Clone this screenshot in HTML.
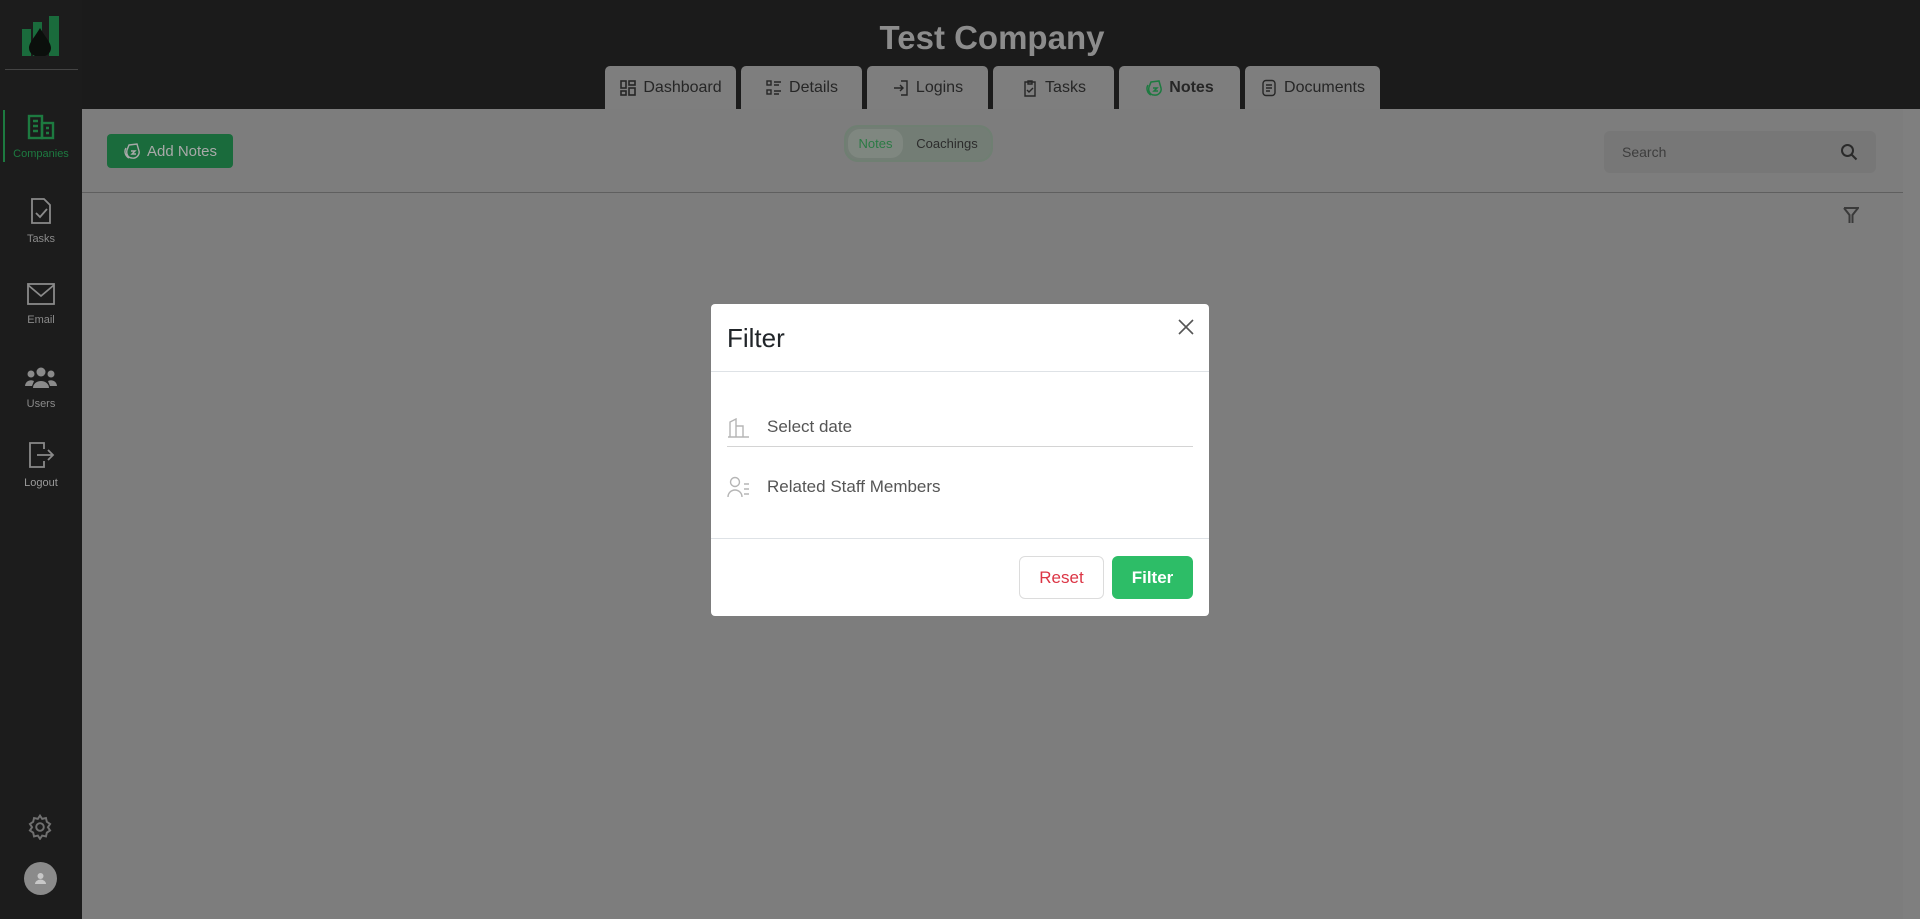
<!DOCTYPE html>
<html><head><meta charset="utf-8"><style>
*{box-sizing:border-box;margin:0;padding:0}
body{width:1920px;height:919px;overflow:hidden;background:#7f7f7f;font-family:"Liberation Sans",sans-serif;position:relative}
.top{position:absolute;left:0;top:0;width:1920px;height:109px;background:#1b1b1b}
.side{position:absolute;left:0;top:0;width:82px;height:919px;background:#1c1c1c}
.title{position:absolute;left:0;width:1984px;top:19px;text-align:center;font-size:33px;font-weight:bold;color:#8c8c8c}
.tab{position:absolute;top:66px;height:43px;background:#7e7e7e;border-radius:5px 5px 0 0;color:#262626;font-size:16px;display:flex;align-items:center;justify-content:center;gap:6px}
.tab svg{width:18px;height:18px}
.content{position:absolute;left:82px;top:109px;width:1821px;height:810px;background:#7d7d7d}
.sub{position:absolute;left:0;top:0;width:1821px;height:84px;border-bottom:1px solid #5f5f5f}
.add{position:absolute;left:25px;top:25px;width:126px;height:34px;background:#1a6b3c;border-radius:4px;color:#a9a9a9;font-size:15px;display:flex;align-items:center;justify-content:center;gap:6px}
.tog{position:absolute;left:762px;top:16px;width:149px;height:37px;border-radius:14px;background:#737d75;border:2px solid #6f7f72}
.tog .a{position:absolute;left:2px;top:2px;width:55px;height:29px;border-radius:12px;background:#7f8780;color:#2b7a44;font-size:13px;text-align:center;line-height:29px}
.tog .b{position:absolute;left:60px;top:2px;width:82px;height:29px;color:#2c2c2c;font-size:13px;text-align:center;line-height:29px}
.search{position:absolute;left:1522px;top:22px;width:272px;height:42px;background:#777;border-radius:6px;color:#3d3d3d;font-size:14px;line-height:42px;padding-left:18px}
.sitem{position:absolute;left:0;width:82px;text-align:center;font-size:11px;color:#8a8a8a}
.sitem svg{display:block;margin:0 auto 8px}
.modal{position:absolute;left:711px;top:304px;width:498px;height:312px;background:#fff;border-radius:4px}
.mh{height:68px;border-bottom:1px solid #dee2e6;position:relative}
.mh span{position:absolute;left:16px;top:19px;font-size:26px;color:#212529}
.row{position:absolute;left:16px;width:466px;font-size:17px;color:#555;}
.btn{position:absolute;top:252px;height:43px;border-radius:6px;font-size:17px;display:flex;align-items:center;justify-content:center}
</style></head><body>
<div class="top"></div>
<div class="side">
 <svg style="position:absolute;left:22px;top:16px" width="38" height="40" viewBox="0 0 38 40"><rect x="0" y="13" width="9" height="27" fill="#1a6b3c"/><rect x="11" y="6" width="9" height="34" fill="#1a6b3c"/><rect x="27" y="0" width="10" height="40" fill="#1a6b3c"/><path d="M18 12 C12 22 7 27 7 32 a11 9 0 0 0 22 0 C29 27 24 22 18 12Z" fill="#0b0f0c"/></svg>
 <div style="position:absolute;left:5px;top:69px;width:73px;height:1px;background:#444"></div>
 <div style="position:absolute;left:3px;top:110px;width:2px;height:52px;background:#1d7a40"></div>
 <div class="sitem" style="top:114px;color:#1d7a40"><svg width="28" height="26" viewBox="0 0 28 26" fill="none" stroke="#1d7a40" stroke-width="2.4"><rect x="2" y="2" width="13" height="22"/><rect x="15" y="9" width="11" height="15"/><path d="M6 7h5M6 12h5M6 17h5M19 14h3M19 19h3"/></svg>Companies</div>
 <div class="sitem" style="top:197px"><svg width="24" height="28" viewBox="0 0 24 28" fill="none" stroke="#8a8a8a" stroke-width="1.8"><path d="M3 2h12l6 6v18H3z"/><path d="M7 16l4 4 7-8"/></svg>Tasks</div>
 <div class="sitem" style="top:282px"><svg width="30" height="24" viewBox="0 0 30 24" fill="none" stroke="#8a8a8a" stroke-width="1.8"><rect x="2" y="2" width="26" height="20"/><path d="M2 3l13 11 13-11"/></svg>Email</div>
 <div class="sitem" style="top:366px"><svg width="32" height="24" viewBox="0 0 32 24" fill="#8a8a8a"><circle cx="16" cy="6" r="4.5"/><circle cx="6" cy="8" r="3.5"/><circle cx="26" cy="8" r="3.5"/><path d="M8 22a8 7 0 0 1 16 0zM0 20a6 6 0 0 1 9-5l-2 5zM32 20a6 6 0 0 0-9-5l2 5z"/></svg>Users</div>
 <div class="sitem" style="top:441px;color:#9a9a9a"><svg width="28" height="28" viewBox="0 0 28 28" fill="none" stroke="#8a8a8a" stroke-width="1.8"><path d="M17 8V2H3v24h14v-6"/><path d="M10 14h16M21 9l5 5-5 5"/></svg>Logout</div>
 <svg style="position:absolute;left:27px;top:814px" width="26" height="26" viewBox="0 0 24 24" fill="none" stroke="#707070" stroke-width="1.8"><circle cx="12" cy="12" r="3.5"/><path d="M12 1.5l2 3 3.5-.8.8 3.5 3 2-2 3 2 3-3 2-.8 3.5-3.5-.8-2 3-2-3-3.5.8-.8-3.5-3-2 2-3-2-3 3-2 .8-3.5 3.5.8z"/></svg>
 <div style="position:absolute;left:24px;top:862px;width:33px;height:33px;border-radius:50%;background:#8a8a8a"><svg width="33" height="33" viewBox="0 0 33 33" fill="#c8c8c8"><circle cx="16.5" cy="14" r="3"/><path d="M11 22a5.5 4.5 0 0 1 11 0z"/></svg></div>
</div>
<div class="title">Test Company</div>
<div class="tab" style="left:605px;width:131px"><svg viewBox="0 0 18 18" fill="none" stroke="#262626" stroke-width="1.6"><rect x="2" y="2" width="5" height="7"/><rect x="10" y="2" width="6" height="4"/><rect x="2" y="12" width="5" height="4"/><rect x="10" y="9" width="6" height="7"/></svg>Dashboard</div>
<div class="tab" style="left:741px;width:121px"><svg viewBox="0 0 18 18" fill="none" stroke="#262626" stroke-width="1.4"><rect x="2" y="2" width="4" height="4"/><rect x="2" y="11" width="4" height="4"/><path d="M9 3h7M9 6h5M9 12h7M9 15h5"/></svg>Details</div>
<div class="tab" style="left:867px;width:121px"><svg viewBox="0 0 18 18" fill="none" stroke="#262626" stroke-width="1.4"><path d="M9 2h6v14H9M2 9h9M8 6l3 3-3 3"/></svg>Logins</div>
<div class="tab" style="left:993px;width:121px"><svg viewBox="0 0 18 18" fill="none" stroke="#262626" stroke-width="1.4"><path d="M4 3h10v14H4zM7 2h4v3H7zM6 11l2 2 4-4"/></svg>Tasks</div>
<div class="tab" style="left:1119px;width:121px;font-weight:bold"><svg viewBox="0 0 18 18" fill="none" stroke="#1d7a40" stroke-width="1.5"><path d="M6 3l8-1 2 7c1 4-3 8-7 7-4 0-6-4-5-8zM3 6c-2 3-1 8 3 10M8 9h4l-3 3h4"/></svg>Notes</div>
<div class="tab" style="left:1245px;width:135px"><svg viewBox="0 0 18 18" fill="none" stroke="#262626" stroke-width="1.4"><rect x="3" y="1.5" width="12" height="15" rx="3"/><path d="M6 6h6M6 9h6M6 12h4"/></svg>Documents</div>
<div class="content">
 <div class="sub">
  <div class="add"><svg width="18" height="18" viewBox="0 0 18 18" fill="none" stroke="#a9a9a9" stroke-width="1.4"><path d="M6 3l8-1 2 7c1 4-3 8-7 7-4 0-6-4-5-8zM3 6c-2 3-1 8 3 10M8 9h4l-3 3h4"/></svg>Add Notes</div>
  <div class="tog"><div class="a">Notes</div><div class="b">Coachings</div></div>
  <div class="search">Search<svg style="position:absolute;right:18px;top:12px" width="18" height="18" viewBox="0 0 18 18" fill="none" stroke="#2a2a2a" stroke-width="2"><circle cx="7.5" cy="7.5" r="5.5"/><path d="M11.5 11.5l5 5"/></svg></div>
 </div>
 <svg style="position:absolute;left:1761px;top:98px" width="16" height="18" viewBox="0 0 16 18" fill="none" stroke="#3a3a3a" stroke-width="2"><path d="M1 1h14l-5.5 7v8M6.5 16V8L1 1"/></svg>
</div>
<div class="modal">
 <div class="mh"><span>Filter</span><svg style="position:absolute;right:15px;top:15px" width="16" height="16" viewBox="0 0 16 16" stroke="#555" stroke-width="1.6"><path d="M1 1l14 14M15 1L1 15"/></svg></div>
 <div class="row" style="top:109px;height:34px;border-bottom:1px solid #d4d4d4"><svg style="position:absolute;left:0;top:5px" width="23" height="20" viewBox="0 0 23 20" fill="none" stroke="#b5b5b5" stroke-width="1.4"><path d="M1 19h21M3 19V4l6-3v18M9 8h7v11"/></svg><span style="position:absolute;left:40px;top:4px">Select date</span></div>
 <div class="row" style="top:169px;height:34px"><svg style="position:absolute;left:0;top:3px" width="24" height="22" viewBox="0 0 24 22" fill="none" stroke="#b5b5b5" stroke-width="1.4"><circle cx="8" cy="6" r="4.5"/><path d="M1 21a7 7 0 0 1 14 0M17 8h5M17 13h5M17 18h5"/></svg><span style="position:absolute;left:40px;top:4px">Related Staff Members</span></div>
 <div style="position:absolute;left:0;top:234px;width:498px;height:1px;background:#dee2e6"></div>
 <div class="btn" style="left:308px;width:85px;border:1px solid #dcdcdc;color:#dc3545">Reset</div>
 <div class="btn" style="left:401px;width:81px;background:#2dbd67;color:#fff;font-weight:bold">Filter</div>
</div>
</body></html>
